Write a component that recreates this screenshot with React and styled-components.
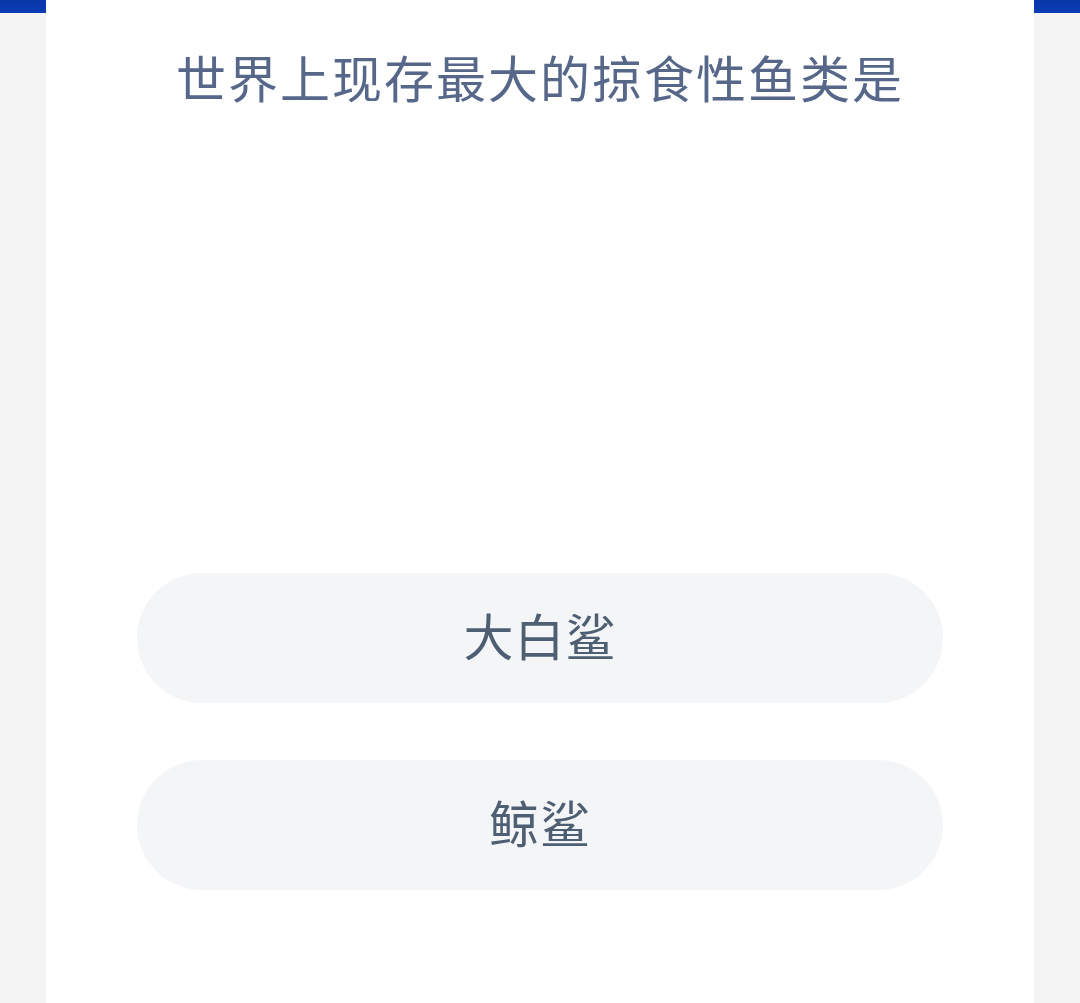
import React from "react";
import styled, { createGlobalStyle } from "styled-components";

const GlobalStyle = createGlobalStyle`
  html, body {
    margin: 0;
    padding: 0;
  }
  body {
    background: linear-gradient(to bottom, #0a36a8 0, #0b3db5 13px, #f4f4f4 13px);
    font-family: "Noto Sans CJK SC", "Noto Sans", sans-serif;
    min-height: 1003px;
  }
`;

const Page = styled.div`
  display: flex;
  justify-content: center;
  min-height: 1003px;
`;

const Card = styled.div`
  width: 988px;
  background: #ffffff;
  display: flex;
  flex-direction: column;
  align-items: center;
  padding-top: 41px;
  box-sizing: border-box;
`;

const Question = styled.div`
  font-size: 50px;
  line-height: 70px;
  letter-spacing: 2px;
  color: #566789;
  text-align: center;
`;

const OptionList = styled.div`
  margin-top: 462px;
  display: flex;
  flex-direction: column;
  gap: 57px;
`;

const Option = styled.button`
  width: 806px;
  height: 130px;
  border: none;
  border-radius: 65px;
  background: #f4f5f7;
  color: #4e5f74;
  font-family: "Noto Sans CJK SC", "Noto Sans", sans-serif;
  font-size: 50px;
  font-weight: 400;
  letter-spacing: 1px;
  display: flex;
  align-items: center;
  justify-content: center;
  padding: 0 0 8px;
  cursor: pointer;
`;

const options = ["大白鲨", "鲸鲨"];

const App = () => {
  return (
    <>
      <GlobalStyle />
      <Page>
        <Card>
          <Question>世界上现存最大的掠食性鱼类是</Question>
          <OptionList>
            {options.map((o) => (
              <Option key={o}>{o}</Option>
            ))}
          </OptionList>
        </Card>
      </Page>
    </>
  );
};

export default App;
